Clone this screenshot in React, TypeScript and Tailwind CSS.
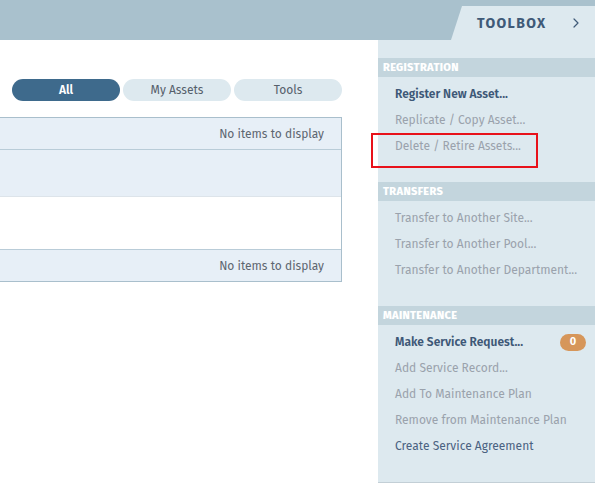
import { ChevronRight } from 'lucide-react';

type Item = { label: string; tone: 'strong' | 'muted' | 'normal'; badge?: string };

const sections: { title: string; items: Item[] }[] = [
  {
    title: 'Registration',
    items: [
      { label: 'Register New Asset...', tone: 'strong' },
      { label: 'Replicate / Copy Asset...', tone: 'muted' },
      { label: 'Delete / Retire Assets...', tone: 'muted' },
    ],
  },
  {
    title: 'Transfers',
    items: [
      { label: 'Transfer to Another Site...', tone: 'muted' },
      { label: 'Transfer to Another Pool...', tone: 'muted' },
      { label: 'Transfer to Another Department...', tone: 'muted' },
    ],
  },
  {
    title: 'Maintenance',
    items: [
      { label: 'Make Service Request...', tone: 'strong', badge: '0' },
      { label: 'Add Service Record...', tone: 'muted' },
      { label: 'Add To Maintenance Plan', tone: 'muted' },
      { label: 'Remove from Maintenance Plan', tone: 'muted' },
      { label: 'Create Service Agreement', tone: 'normal' },
    ],
  },
];

const toneClass = {
  strong: 'font-semibold text-[#3d5877]',
  muted: 'text-[#9aa2ac]',
  normal: 'text-[#4a6281]',
};

function Toolbox() {
  return (
    <aside className="w-[217px] h-[443px] bg-[#dde9ef] border-b border-[#c3cfd6] pt-[18px] flex flex-col gap-[23px]">
      {sections.map((s) => (
        <section key={s.title}>
          <div className="h-[19px] bg-[#c3d5dd] pl-[5px] pt-[1px] flex items-center text-[11px] font-extrabold uppercase text-white tracking-[0.03em]">
            {s.title}
          </div>
          <ul className="pt-[4px]">
            {s.items.map((it) => (
              <li key={it.label} className={`h-[26px] pl-[17px] pr-[9px] flex items-center justify-between text-[12px] ${toneClass[it.tone]}`}>
                <span>{it.label}</span>
                {it.badge && (
                  <span className="w-[26px] h-[17px] rounded-full bg-[#d6965a] text-white text-[11px] font-bold flex items-center justify-center">
                    {it.badge}
                  </span>
                )}
              </li>
            ))}
          </ul>
        </section>
      ))}
    </aside>
  );
}

function Rows() {
  return (
    <div className="w-[342px] mt-[16px] border-y border-r border-[#a9bfcc] text-[12px] text-[#5d6670]">
      <div className="h-[32px] bg-[#e7eff7] border-b border-[#b9ccd8] flex items-center justify-end pr-[17px]">
        No items to display
      </div>
      <div className="h-[47px] bg-[#e7eff7] border-b border-[#dde4ea]" />
      <div className="h-[53px] bg-white border-b border-[#b9ccd8]" />
      <div className="h-[31px] bg-[#e7eff7] flex items-center justify-end pr-[17px]">
        No items to display
      </div>
    </div>
  );
}

export default function App() {
  const tabs = ['All', 'My Assets', 'Tools'];
  return (
    <div className="relative w-[595px] h-[484px] overflow-hidden bg-white font-['Fira_Sans','Open_Sans',sans-serif]">
      <header className="h-[40px] bg-[#a9c1cd] flex justify-end items-end">
        <div className="w-[144px] h-[34px] bg-[#dde9ef] [clip-path:polygon(11px_0,100%_0,100%_100%,0_100%)] flex items-center pl-[26px] gap-[21px] text-[#3f5a78]">
          <span className="text-[14px] font-bold tracking-[0.1em]">TOOLBOX</span>
          <ChevronRight size={16} strokeWidth={1.8} />
        </div>
      </header>
      <div className="flex">
        <main className="w-[378px] pt-[39px]">
          <div className="flex gap-[3px] pl-[12px] text-[12px]">
            {tabs.map((t, i) => (
              <button
                key={t}
                className={`w-[108px] h-[22px] rounded-full flex items-center justify-center ${
                  i === 0 ? 'bg-[#3e6a8c] text-white font-semibold' : 'bg-[#dde9ef] text-[#55606b]'
                }`}
              >
                {t}
              </button>
            ))}
          </div>
          <Rows />
        </main>
        <Toolbox />
      </div>
      <div className="absolute left-[371px] top-[133px] w-[167px] h-[35px] border-2 border-[#e8111a]" />
    </div>
  );
}
